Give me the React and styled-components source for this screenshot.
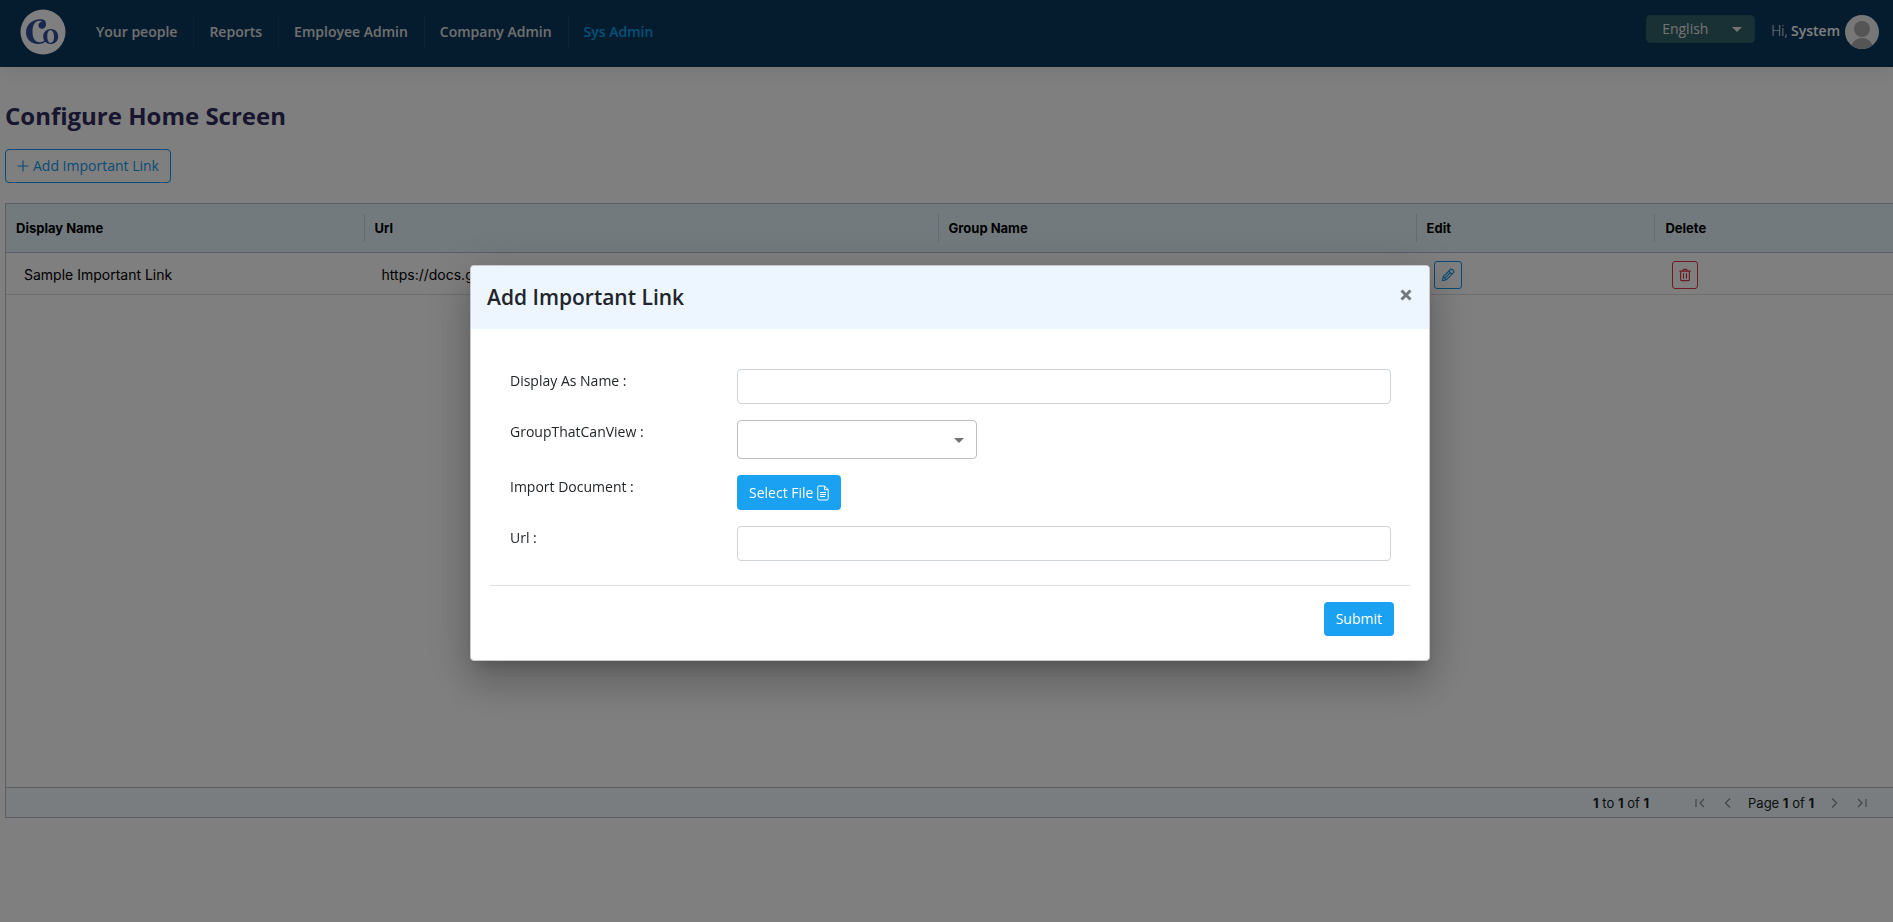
import React from "react";
import styled, { createGlobalStyle, css } from "styled-components";

const Global = createGlobalStyle`
  *, *::before, *::after { box-sizing: border-box; }
  body { margin: 0; background: #fff; color: #212529; overflow: hidden;
    font: 14px/20px "Open Sans", "Noto Sans", sans-serif; }
  button, input, select { font: inherit; margin: 0; }
  button { cursor: pointer; }
`;

const Page = styled.div`
  min-height: 100vh;
  display: flex;
  flex-direction: column;
`;

const Header = styled.header`
  display: flex;
  align-items: center;
  height: 67px;
  padding: 0 14px 4px 20px;
  background: #0a385e;
  color: #e6e6e6;
  box-shadow: 0 2px 20px rgba(0, 0, 0, 0.1);
`;

const Nav = styled.nav`
  display: flex;
  margin-left: 14px;
`;

const NavLink = styled.a`
  padding: 6px 16px 6px 15px;
  line-height: 22px;
  font-weight: 600;
  text-decoration: none;
  color: ${(p) => (p.$active ? "#0ba2ee" : "#e0e0e0")};
  border-left: 1px solid ${(p) => (p.$first ? "transparent" : "#154470")};
`;

const arrow = css`
  &::after {
    content: "";
    position: absolute;
    right: 13px;
    top: 50%;
    margin-top: -2px;
    border: 5px solid transparent;
    border-top-color: currentColor;
    border-bottom: 0;
    pointer-events: none;
  }
`;

const LanguageBox = styled.div`
  position: relative;
  display: flex;
  width: 109px;
  height: 28px;
  margin: 0 16px 5px auto;
  ${arrow}
`;

const LanguageSelect = styled.select`
  appearance: none;
  width: 100%;
  padding: 0 15px;
  border: 1px solid #2a5a60;
  border-radius: 4px;
  background: #326068;
  color: #e6e6e6;
`;

const Greeting = styled.span`
  margin: 0 5px 2px 0;
  font-weight: 300;
  color: #fff;
  b { font-weight: 600; }
`;

const Main = styled.main`
  padding: 33px 0 0 5px;
`;

const Title = styled.h1`
  margin: 0 0 18px;
  font-size: 24px;
  line-height: 31px;
  font-weight: 700;
  color: #302c5c;
`;

const AddButton = styled.button`
  display: flex;
  align-items: center;
  gap: 4px;
  height: 34px;
  padding: 0 11px;
  border: 1px solid #1097ea;
  border-radius: 4px;
  background: transparent;
  color: #1097ea;
`;

const Grid = styled.section`
  display: flex;
  flex-direction: column;
  height: 615px;
  margin-top: 20px;
  border: 1px solid #babfc7;
  border-right: 0;
  font-family: Inter, "Liberation Sans", sans-serif;
  font-size: 13px;
`;

const Table = styled.table`
  width: 100%;
  table-layout: fixed;
  border-collapse: separate;
  border-spacing: 0;
  color: #000;
`;

const Col = styled.col`
  width: ${(p) => p.$share}%;
`;

const HeadCell = styled.th`
  height: 49px;
  padding: 0;
  text-align: left;
  font-weight: 700;
  background: #e4f4fa;
  border-bottom: 1px solid #babfd0;
`;

const HeadLabel = styled.div`
  padding-left: 10px;
  line-height: 28px;
  border-left: ${(p) => (p.$first ? "0" : "1px solid #ccd8dc")};
`;

const Cell = styled.td`
  height: 42px;
  padding: 2px 0 0 18px;
  font-size: 14px;
  white-space: nowrap;
  border-bottom: 1px solid #d9dce8;
`;

const IconButton = styled.button`
  display: flex;
  align-items: center;
  justify-content: center;
  height: 28px;
  width: ${(p) => (p.$danger ? 26 : 28)}px;
  padding: 0;
  border-radius: 3px;
  border: 1px solid currentColor;
  background: transparent;
  color: ${(p) => (p.$danger ? "#dc3545" : "#1097ea")};
`;

const Pager = styled.footer`
  display: flex;
  align-items: center;
  justify-content: flex-end;
  height: 30px;
  margin-top: auto;
  padding-right: 23px;
  border-top: 1px solid #babfc7;
  background: #f3faff;
  color: #181d1f;
`;

const PagerNav = styled.div`
  display: flex;
  align-items: center;
  gap: 12px;
  margin-left: 43px;
`;

const PagerButton = styled.button`
  display: flex;
  align-items: center;
  justify-content: center;
  width: 16px;
  height: 16px;
  padding: 0;
  border: 0;
  background: none;
  color: #888c90;
`;

const Backdrop = styled.div`
  position: fixed;
  inset: 0;
  display: flex;
  align-items: flex-start;
  justify-content: center;
  padding: 265px 0 0 7px;
  background: rgba(0, 0, 0, 0.5);
`;

const Dialog = styled.form`
  width: 960px;
  max-width: 100%;
  border: 1px solid #c8c8c8;
  border-radius: 4px;
  background: #fff;
  box-shadow: 0 11px 15px -7px rgba(0, 0, 0, 0.2), 0 24px 38px 3px rgba(0, 0, 0, 0.14),
    0 9px 46px 8px rgba(0, 0, 0, 0.12);
`;

const DialogHead = styled.header`
  display: flex;
  justify-content: space-between;
  align-items: flex-start;
  padding: 16px;
  height: 63px;
  border-radius: 3px 3px 0 0;
  background: #edf6ff;
`;

const DialogTitle = styled.h2`
  margin: 0;
  font-size: 21px;
  line-height: 31px;
  font-weight: 600;
`;

const Close = styled.button`
  display: flex;
  padding: 7px 1px;
  border: 0;
  background: none;
  color: #74797d;
`;

const Fields = styled.div`
  display: grid;
  grid-template-columns: 227px 1fr;
  row-gap: 16px;
  margin: 0 19px;
  padding: 40px 19px 24px 20px;
  border-bottom: 1px solid #dee2e6;
`;

const Label = styled.label`
  padding-top: 2px;
  line-height: 20px;
`;

const TextInput = styled.input`
  width: 100%;
  height: 35px;
  padding: 0 12px;
  border: 1px solid #ced4da;
  border-radius: 4px;
`;

const SelectBox = styled.div`
  position: relative;
  width: 240px;
  color: #757575;
  ${arrow}
`;

const Select = styled.select`
  display: block;
  appearance: none;
  width: 100%;
  height: 39px;
  padding: 0 12px;
  border: 1px solid #bebebe;
  border-radius: 4px;
  background: #fff;
`;

const Primary = styled.button`
  display: flex;
  align-items: center;
  justify-self: start;
  gap: 4px;
  height: ${(p) => p.$height || 34}px;
  padding: 0 12px;
  border: 0;
  border-radius: 4px;
  background: #1aa1f2;
  color: #fff;
`;

const Actions = styled.footer`
  display: flex;
  justify-content: flex-end;
  padding: 16px 35px 24px;
`;

const Icon = ({ size = 16, width, height, stroke = 1.2, box = "0 0 16 16", children }) => (
  <svg width={width || size} height={height || size} viewBox={box} fill="none"
    stroke="currentColor" strokeWidth={stroke} strokeLinejoin="round" aria-hidden="true">
    {children}
  </svg>
);

const Logo = () => (
  <svg width="46" height="46" viewBox="0 0 46 46" role="img" aria-label="Co">
    <circle cx="23" cy="23" r="22.5" fill="#fff" />
    <g fill="#304f9c">
      <path d="M25 11.5c-2-1.400-4-1.500-6-1.200C11 11 6 16.500 6 23.500 6 30 11 35 18 35c4 0 7.500-1.500 9-4.500l-1-.8c-1.500 2.300-3.600 3.500-6 3.500-5 0-7.500-4-7.500-10.500 0-6.800 2.500-11 7-11 1 0 2 .2 2.800.7-2.500.6-3.800 2-3.800 4 0 2 1.500 3.300 3.500 3.300 2.400 0 4-1.700 4-4 0-1.700-.5-3.200-1-4.200z" />
      <path fillRule="evenodd" d="M31 20c-4.600 0-7.800 3.300-7.800 7.600s3 7.400 7.300 7.400c4.600 0 7.700-3.300 7.700-7.600S35.300 20 31 20zm-.6 1.200c2.300 0 3.600 2.500 3.600 6.400 0 3.700-1 6.200-3.100 6.200-2.300 0-3.600-2.600-3.600-6.400 0-3.800 1-6.200 3.100-6.200z" />
    </g>
  </svg>
);

const Avatar = () => (
  <svg width="34" height="34" viewBox="0 0 34 34" role="img" aria-label="Profile">
    <defs><clipPath id="face"><circle cx="17" cy="17" r="17" /></clipPath></defs>
    <g clipPath="url(#face)">
      <rect width="34" height="34" fill="#eee" />
      <circle cx="17" cy="14" r="8" fill="#aaa" />
      <circle cx="17" cy="34" r="11" fill="#aaa" />
    </g>
  </svg>
);

const columns = [
  ["Display Name", 18.95],
  ["Url", 30.42],
  ["Group Name", 25.33],
  ["Edit", 12.66],
  ["Delete", 12.64],
];

const links = ["Your people", "Reports", "Employee Admin", "Company Admin", "Sys Admin"];

export default function App() {
  return (
    <Page>
      <Global />
      <Header>
        <Logo />
        <Nav>
          {links.map((name, i) => (
            <NavLink key={name} href="#" $first={i === 0} $active={name === "Sys Admin"}>{name}</NavLink>
          ))}
        </Nav>
        <LanguageBox>
          <LanguageSelect aria-label="Language"><option>English</option></LanguageSelect>
        </LanguageBox>
        <Greeting>Hi, <b>System</b></Greeting>
        <Avatar />
      </Header>

      <Main>
        <Title>Configure Home Screen</Title>
        <AddButton type="button">
          <Icon size={12} box="0 0 12 12"><path d="M6 .5v11M.5 6h11" /></Icon>
          Add Important Link
        </AddButton>
        <Grid>
          <Table>
            <colgroup>{columns.map(([n, share]) => <Col key={n} $share={share} />)}</colgroup>
            <thead>
              <tr>
                {columns.map(([n], i) => (
                  <HeadCell key={n} scope="col"><HeadLabel $first={i === 0}>{n}</HeadLabel></HeadCell>
                ))}
              </tr>
            </thead>
            <tbody>
              <tr>
                <Cell>Sample Important Link</Cell>
                <Cell>https://docs.google.com</Cell>
                <Cell />
                <Cell>
                  <IconButton type="button" aria-label="Edit">
                    <Icon size={14} stroke={1.3}>
                      <path d="M1.500 14.500l1-4.500 8-8c.8-.8 2-.8 2.800 0l.7.7c.8.8.8 2 0 2.800l-8 8-4.500 1zM9 3.500l3.500 3.500M2.500 10l3.500 3.500M11 5l-6.500 6.500" />
                    </Icon>
                  </IconButton>
                </Cell>
                <Cell>
                  <IconButton type="button" aria-label="Delete" $danger>
                    <Icon size={14} stroke={1.3}>
                      <path d="M1.500 3.500h13M3 3.500v9.500a1.500 1.500 0 0 0 1.500 1.500h7a1.500 1.500 0 0 0 1.500-1.500V3.500M5.500 3.500l.8-2h3.400l.8 2M6.300 6v6M9.700 6v6" />
                    </Icon>
                  </IconButton>
                </Cell>
              </tr>
            </tbody>
          </Table>
          <Pager>
            <span><b>1</b> to <b>1</b> of <b>1</b></span>
            <PagerNav>
              <PagerButton type="button" aria-label="First page">
                <Icon><path d="M4 4v8M12 4l-4 4 4 4" /></Icon>
              </PagerButton>
              <PagerButton type="button" aria-label="Previous page">
                <Icon><path d="M10 3.500L5.500 8l4.500 4.500" /></Icon>
              </PagerButton>
              <div>Page <b>1</b> of <b>1</b></div>
              <PagerButton type="button" aria-label="Next page">
                <Icon><path d="M6 3.500L10.500 8 6 12.500" /></Icon>
              </PagerButton>
              <PagerButton type="button" aria-label="Last page">
                <Icon><path d="M12 4v8M4 4l4 4-4 4" /></Icon>
              </PagerButton>
            </PagerNav>
          </Pager>
        </Grid>
      </Main>

      <Backdrop>
        <Dialog role="dialog" aria-modal="true" aria-labelledby="dialog-title">
          <DialogHead>
            <DialogTitle id="dialog-title">Add Important Link</DialogTitle>
            <Close type="button" aria-label="Close">
              <Icon size={12} box="0 0 12 12" stroke={3}><path d="M1.500 1.500l9 9M10.500 1.500l-9 9" /></Icon>
            </Close>
          </DialogHead>
          <Fields>
            <Label htmlFor="display-name">Display As Name :</Label>
            <TextInput id="display-name" />
            <Label htmlFor="group">GroupThatCanView :</Label>
            <SelectBox>
              <Select id="group"><option value=""></option></Select>
            </SelectBox>
            <Label htmlFor="document">Import Document :</Label>
            <Primary id="document" type="button" $height={35}>
              Select File
              <Icon width={12} height={16} box="0 0 12 16" stroke={1}>
                <path d="M7.500 1H2a1.200 1.200 0 0 0-1.200 1.200v11.600A1.200 1.200 0 0 0 2 15h8a1.200 1.200 0 0 0 1.200-1.200V4.700zM7.500 1v3.700h3.700M3 7.500h6M3 9.500h6M3 11.500h5" />
              </Icon>
            </Primary>
            <Label htmlFor="url">Url :</Label>
            <TextInput id="url" />
          </Fields>
          <Actions>
            <Primary type="submit">Submit</Primary>
          </Actions>
        </Dialog>
      </Backdrop>
    </Page>
  );
}
